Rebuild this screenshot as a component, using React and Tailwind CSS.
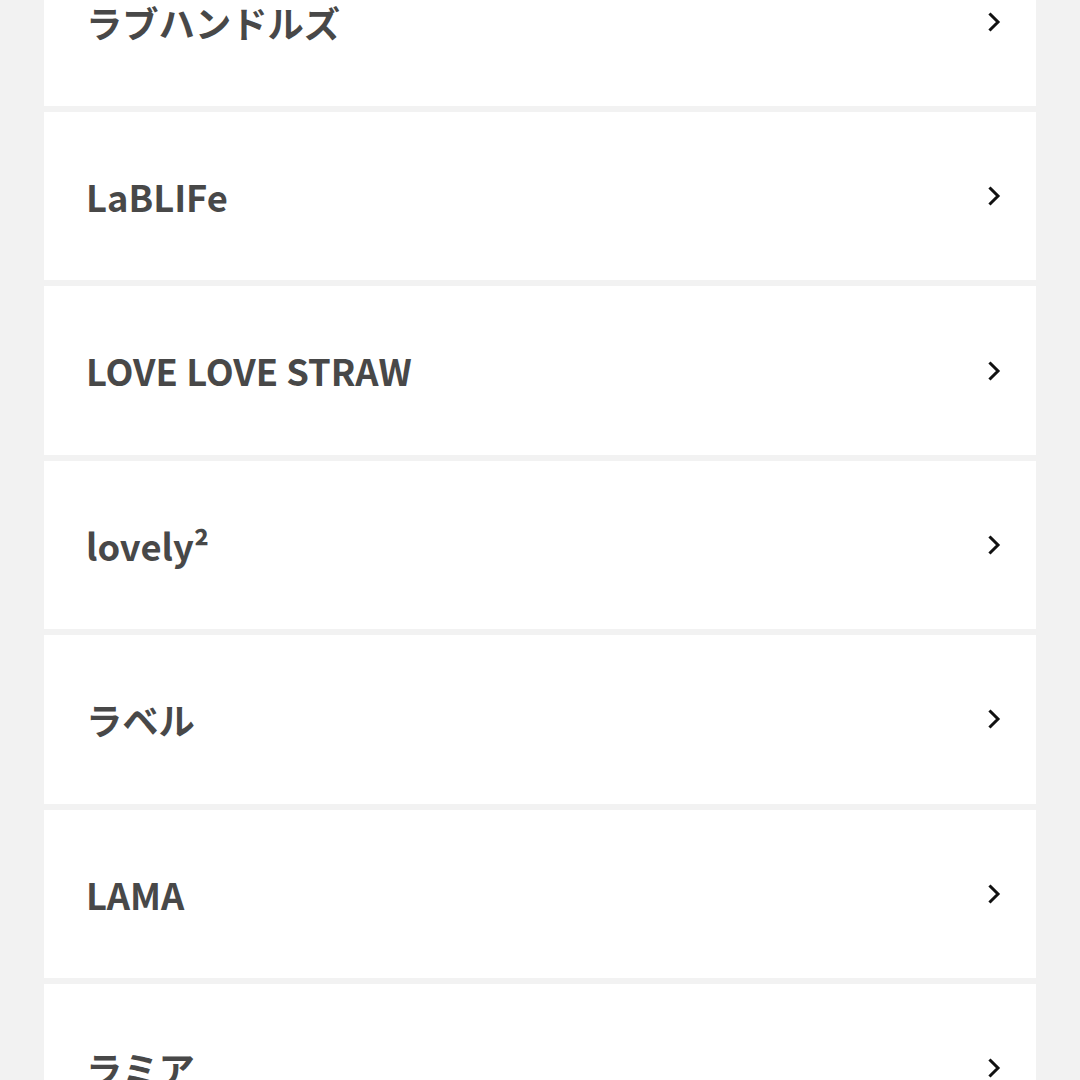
const brands = ["ラブハンドルズ", "LaBLIFe", "LOVE LOVE STRAW", "lovely²", "ラベル", "LAMA", "ラミア"];

function Chevron() {
  return (
    <svg width="16" height="20" viewBox="0 0 16 20" fill="none" className="shrink-0">
      <path d="M3.5 2.5 11 10 3.5 17.5" stroke="#111" strokeWidth="3" strokeLinecap="square" />
    </svg>
  );
}

export default function App() {
  return (
    <div className="min-h-[1080px] h-[1080px] overflow-hidden bg-[#f2f2f2] px-[44px]" style={{ fontFamily: '"Noto Sans CJK JP", "Noto Sans", sans-serif' }}>
      <div className="-mt-[62.4px] flex flex-col gap-[6px]">
        {brands.map((name) => (
          <div key={name} className="h-[168.4px] bg-white flex items-center justify-between pl-[42px] pr-[33px]">
            <span className="text-[36.3px] font-bold text-[#484848] leading-none">{name}</span>
            <Chevron />
          </div>
        ))}
      </div>
    </div>
  );
}
